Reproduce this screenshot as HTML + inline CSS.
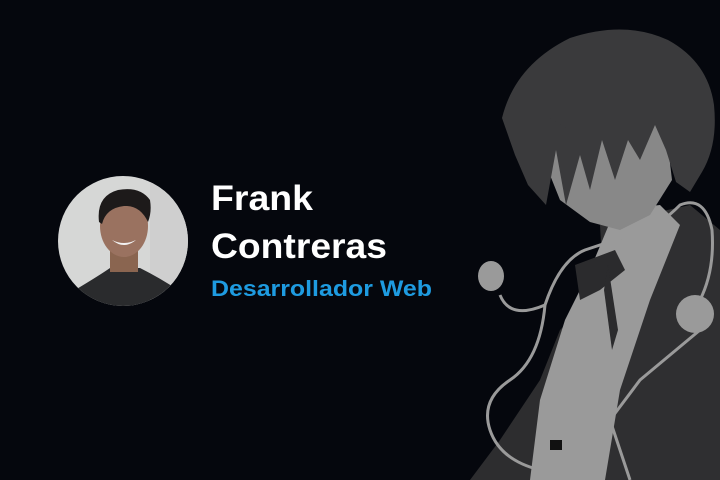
<!DOCTYPE html>
<html><head><meta charset="utf-8"><style>
html,body{margin:0;padding:0;background:#05070d;width:720px;height:480px;overflow:hidden}
svg{display:block}
</style></head><body>
<svg width="720" height="480" viewBox="0 0 720 480" xmlns="http://www.w3.org/2000/svg">
<rect width="720" height="480" fill="#05070d"/>
<defs><clipPath id="c"><circle cx="123" cy="241" r="65"/></clipPath></defs>
<g clip-path="url(#c)">
<rect x="55" y="172" width="140" height="140" fill="#d6d7d6"/>
<rect x="150" y="172" width="45" height="140" fill="#cfcfcf"/>
<path d="M70 310 L75 290 Q100 275 110 268 L140 268 Q160 278 178 290 L185 310 Z" fill="#2a2b2d"/>
<rect x="110" y="250" width="28" height="22" fill="#8a6550"/>
<ellipse cx="124" cy="226" rx="24" ry="31" fill="#9a7260"/>
<path d="M99 222 Q96 196 118 190 Q140 186 150 200 Q152 212 148 222 Q140 205 124 206 Q106 208 102 224 Z" fill="#1d1a1a"/>
<path d="M112 240 Q124 250 136 240 Q124 246 112 240 Z" fill="#f2f2f2"/>
</g>
<g font-family="Liberation Sans, sans-serif" font-weight="bold">
<text x="211" y="210" font-size="35" fill="#ffffff" textLength="102" lengthAdjust="spacingAndGlyphs">Frank</text>
<text x="211" y="258" font-size="35" fill="#ffffff" textLength="176" lengthAdjust="spacingAndGlyphs">Contreras</text>
<text x="211" y="296" font-size="22" fill="#1e9be0" textLength="221" lengthAdjust="spacingAndGlyphs">Desarrollador Web</text>
</g>
<g>
<!-- jacket right -->
<path d="M600 225 L690 205 L720 230 L720 480 L600 480 L610 400 Z" fill="#2f2f31"/>
<!-- jacket left bottom -->
<path d="M470 480 L500 440 L540 380 L560 330 L590 300 L560 480 Z" fill="#2d2d2f"/>
<!-- shirt -->
<path d="M615 210 L660 205 L680 225 L650 300 L620 390 L605 480 L530 480 L540 400 L565 320 L590 270 Z" fill="#9a9a9a"/>
<!-- face/neck -->
<path d="M545 110 L610 85 L665 120 L672 180 L650 215 L620 230 L590 222 L560 200 L548 170 Z" fill="#888888"/>
<!-- hair -->
<path d="M502 118 Q515 65 570 38 Q625 20 668 40 Q708 62 714 105 Q718 145 702 172 L690 192 L676 182 L666 150 L655 125 L640 160 L628 140 L615 180 L602 140 L590 190 L580 155 L566 205 L556 150 L546 205 L528 185 L515 155 Z" fill="#3a3a3c"/>
<path d="M545 115 L590 85 L600 120 L585 160 L570 130 Z" fill="#3a3a3c"/>
<!-- bow -->
<path d="M575 265 L615 250 L625 270 L600 290 L580 300 Z" fill="#2b2b2d"/>
<path d="M608 265 L618 330 L612 350 L604 290 Z" fill="#2b2b2d"/>
<!-- cable -->
<path d="M500 295 Q510 320 545 305 Q560 260 585 250 Q615 240 645 230 Q660 225 680 205 Q705 195 712 230 Q715 270 700 300 M545 305 Q540 360 510 380 Q480 400 490 430 Q500 460 540 470 M600 380 L555 420 L540 470" fill="none" stroke="#9a9a9a" stroke-width="3"/>
<path d="M700 330 L640 380 L610 420 L630 480" fill="none" stroke="#9a9a9a" stroke-width="3"/>
<ellipse cx="491" cy="276" rx="13" ry="15" fill="#9a9a9a"/>
<circle cx="695" cy="314" r="19" fill="#9a9a9a"/>
<rect x="550" y="440" width="12" height="10" fill="#111"/>
</g>
</svg>
</body></html>
